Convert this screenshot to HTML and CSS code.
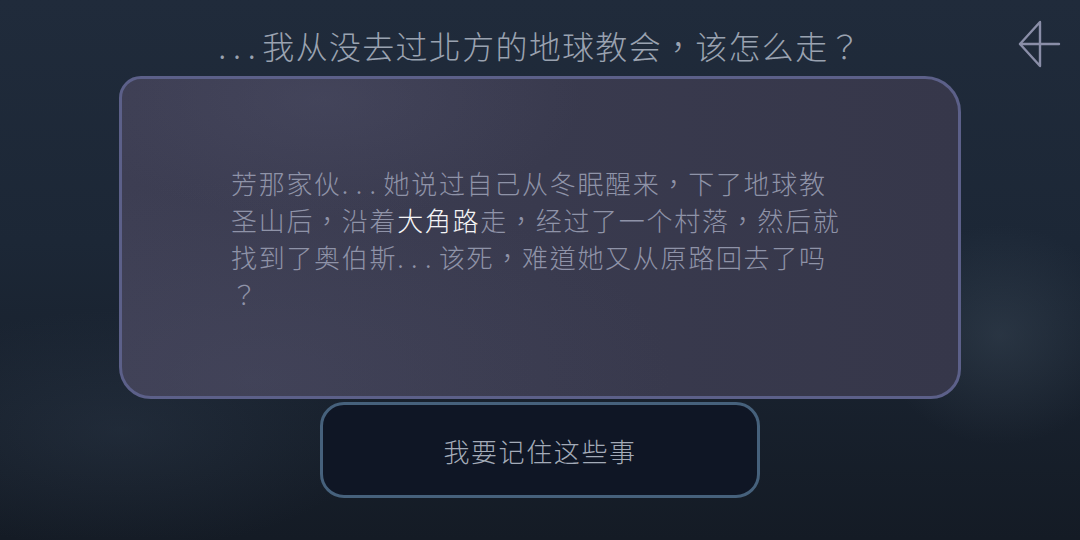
FILE: index.html
```html
<!DOCTYPE html>
<html lang="zh-CN">
<head>
<meta charset="utf-8">
<title>对话</title>
<link rel="stylesheet" href="styles.css">
</head>
<body>
<div class="screen">
  <header class="header">
    <div class="spacer"></div>
    <h1 class="title"><span class="title-dots">...</span>我从没去过北方的地球教会，该怎么走？</h1>
    <button class="back" aria-label="返回">
      <svg width="44" height="48" viewBox="0 0 44 48" fill="none" stroke="#8a8ea8" stroke-width="2.4" stroke-linecap="round" stroke-linejoin="round">
        <path d="M22 2 L2 24 L22 46 Z"/>
        <path d="M2 24 H41"/>
      </svg>
    </button>
  </header>
  <section class="card">
    <p class="dialog">芳那家伙<span class="dots">...</span>她说过自己从冬眠醒来，下了地球教圣山后，沿着<em class="key">大角路</em>走，经过了一个村落，然后就找到了奥伯斯<span class="dots">...</span>该死，难道她又从原路回去了吗？</p>
  </section>
  <button class="choice">我要记住这些事</button>
</div>
</body>
</html>
```

FILE: styles.css
```css
html, body {
  margin: 0;
  padding: 0;
}

body {
  width: 1080px;
  height: 540px;
  overflow: hidden;
  font-family: "Noto Sans CJK TC", "Noto Sans CJK SC", "Noto Sans", sans-serif;
  font-feature-settings: "locl" 0;
  text-spacing-trim: space-all;
  background:
    radial-gradient(ellipse 120px 110px at 1000px 335px, rgba(70, 85, 100, 0.35), rgba(70, 85, 100, 0) 100%),
    radial-gradient(ellipse 260px 120px at 120px 430px, rgba(60, 75, 95, 0.25), rgba(60, 75, 95, 0) 100%),
    linear-gradient(to bottom, #202b3b 0%, #1c2736 45%, #141b25 100%);
}

.screen {
  display: flex;
  flex-direction: column;
  align-items: center;
  width: 1080px;
  height: 540px;
}

.header {
  width: 100%;
  box-sizing: border-box;
  display: grid;
  grid-template-columns: 1fr auto 1fr;
  align-items: center;
  height: 76px;
  padding-top: 20px;
}

.title {
  margin: 0;
  margin-top: -6px;
  font-size: 32px;
  font-weight: 300;
  line-height: 56px;
  letter-spacing: 1.3px;
  color: #9aa2b0;
  white-space: nowrap;
}

.title-dots {
  letter-spacing: 6.7px;
}

.back {
  justify-self: end;
  margin-right: 18px;
  margin-top: -8px;
  padding: 0;
  border: 0;
  background: none;
  display: flex;
}

.card {
  box-sizing: border-box;
  width: 842px;
  height: 323px;
  border: 3px solid #5c6089;
  border-radius: 22px 36px 30px 32px;
  background:
    radial-gradient(ellipse 260px 120px at 200px 20px, rgba(85, 86, 112, 0.3), rgba(85, 86, 112, 0) 100%),
    radial-gradient(ellipse 420px 200px at 130px 300px, rgba(78, 80, 104, 0.3), rgba(78, 80, 104, 0) 100%),
    linear-gradient(to right, #3d3e53 0%, #393a4e 50%, #36374a 100%);
  padding: 85px 0 0 109px;
}

.dialog {
  margin: 0;
  width: 616px;
  font-size: 26px;
  font-weight: 300;
  line-height: 37px;
  letter-spacing: 1.7px;
  color: #8f93a8;
  line-break: anywhere;
  word-break: break-all;
}

.dots {
  letter-spacing: 7.4px;
}

.key {
  font-style: normal;
  font-weight: 300;
  color: #f4f4f6;
}

.choice {
  box-sizing: border-box;
  margin-top: 3px;
  width: 440px;
  height: 96px;
  border: 3px solid #46617c;
  border-radius: 24px;
  background: #0f1625;
  font-family: "Noto Sans CJK TC", "Noto Sans CJK SC", "Noto Sans", sans-serif;
  font-feature-settings: "locl" 0;
  font-size: 26px;
  font-weight: 300;
  letter-spacing: 1.6px;
  color: #a3abb8;
  padding: 0;
}
```
